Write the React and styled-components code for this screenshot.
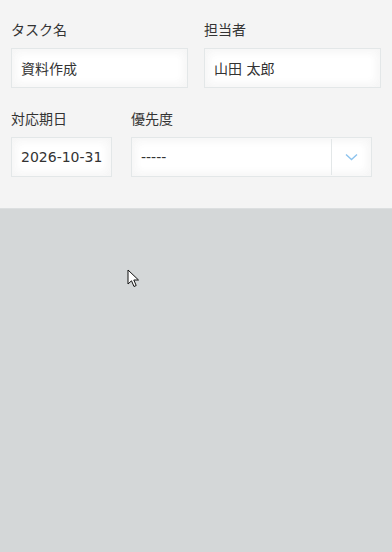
import React from "react";
import styled, { createGlobalStyle } from "styled-components";

const GlobalStyle = createGlobalStyle`
  html, body {
    margin: 0;
    padding: 0;
    background: #d4d7d8;
  }
  body {
    font-family: "DejaVu Sans", "Noto Sans CJK JP", sans-serif;
    color: #333333;
  }
`;

function Chevron() {
  return (
    <svg width="13" height="8" viewBox="0 0 13 8">
      <path d="M1 1.5 L6.5 6.5 L12 1.5" fill="none" stroke="#8cc3ee" strokeWidth="1.4" />
    </svg>
  );
}

function Cursor() {
  return (
    <svg width="14" height="20" viewBox="0 0 14 20">
      <path
        d="M1 1 L1 15 L4.5 11.8 L7 17.5 L9.2 16.5 L6.8 11 L11.5 11 Z"
        fill="#ffffff"
        stroke="#111111"
        strokeWidth="1"
        strokeLinejoin="round"
      />
    </svg>
  );
}

function App() {
  return (
    <Page>
      <GlobalStyle />
      <Panel>
        <Row>
          <Field>
            <Label>タスク名</Label>
            <Input width={177}>資料作成</Input>
          </Field>
          <Field>
            <Label>担当者</Label>
            <Input width={177}>山田 太郎</Input>
          </Field>
        </Row>
        <Row gap={19}>
          <Field>
            <Label>対応期日</Label>
            <Input width={101}>2026-10-31</Input>
          </Field>
          <Field>
            <Label>優先度</Label>
            <Select>
              <span className="value">-----</span>
              <span className="toggle">
                <Chevron />
              </span>
            </Select>
          </Field>
        </Row>
      </Panel>
      <Pointer>
        <Cursor />
      </Pointer>
    </Page>
  );
}

const Page = styled.div`
  position: relative;
  width: 392px;
  height: 552px;
  overflow: hidden;
  background: #d4d7d8;
`;

const Panel = styled.div`
  background: #f4f4f4;
  border-bottom: 1px solid #dcdfe0;
  height: 209px;
  box-sizing: border-box;
  padding: 20px 0 0 11px;
  display: flex;
  flex-direction: column;
  gap: 21px;
`;

const Row = styled.div`
  display: flex;
  gap: ${(p) => p.gap || 16}px;
`;

const Field = styled.div`
  display: flex;
  flex-direction: column;
  gap: 8px;
`;

const Label = styled.div`
  font-size: 14px;
  line-height: 20px;
  height: 20px;
  color: #333333;
  white-space: nowrap;
`;

const Input = styled.div`
  box-sizing: border-box;
  width: ${(p) => p.width}px;
  height: 40px;
  border: 1px solid #e3e7e8;
  background: #ffffff;
  box-shadow: 1px 1px 12px #f5f5f5 inset, -1px -1px 12px #f5f5f5 inset;
  padding: 0 9px;
  display: flex;
  align-items: center;
  font-size: 14px;
  color: #333333;
  white-space: nowrap;
`;

const Select = styled.div`
  box-sizing: border-box;
  width: 241px;
  height: 40px;
  border: 1px solid #e3e7e8;
  background: #ffffff;
  box-shadow: 1px 1px 12px #f5f5f5 inset, -1px -1px 12px #f5f5f5 inset;
  display: flex;
  align-items: stretch;
  font-size: 14px;
  color: #333333;

  .value {
    flex: 1;
    display: flex;
    align-items: center;
    padding-left: 9px;
  }
  .toggle {
    width: 39px;
    border-left: 1px solid #e3e7e8;
    margin: 1px 0;
    display: flex;
    align-items: center;
    justify-content: center;
  }
`;

const Pointer = styled.div`
  position: absolute;
  left: 127px;
  top: 269px;
  line-height: 0;
`;

export default App;
